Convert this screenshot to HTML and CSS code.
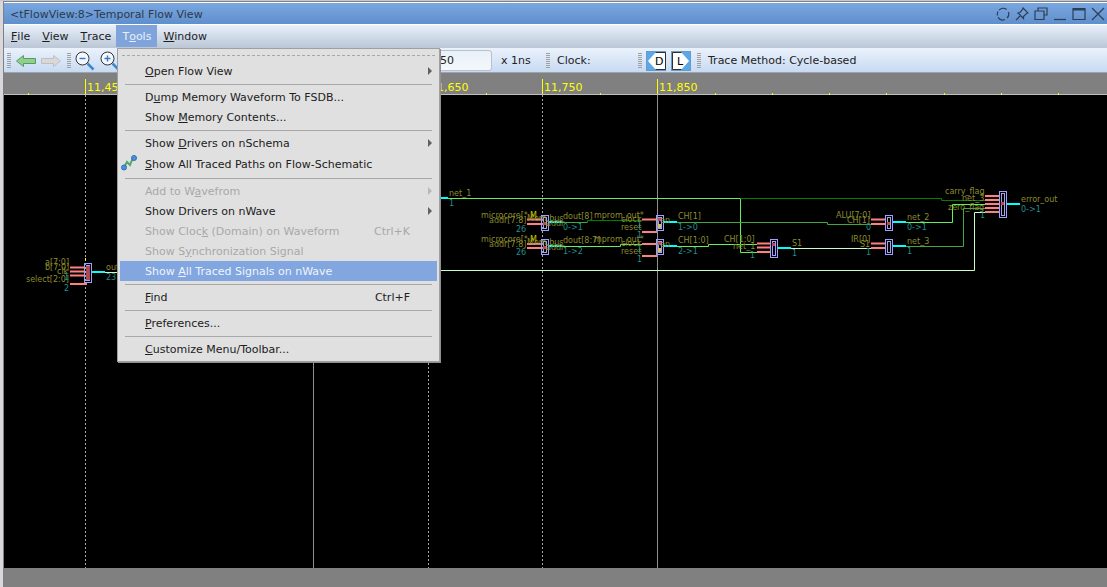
FILE: index.html
```html
<!DOCTYPE html>
<html lang="en">
<head>
<meta charset="utf-8">
<title>Temporal Flow View</title>
<link rel="stylesheet" href="styles.css">
</head>
<body>
<div class="window">
  <header class="titlebar">
    <span class="title">&lt;tFlowView:8&gt;Temporal Flow View</span>
    <div class="winbtns">
      <svg class="winbtn" viewBox="0 0 14 14"><path d="M3 3.2A5.6 5.6 0 0 1 10.6 2.4M12.4 5A5.6 5.6 0 0 1 11 11M8.8 12.5A5.6 5.6 0 0 1 2 10.4M1.5 8.5A5.6 5.6 0 0 1 2 4.5"/></svg>
      <svg class="winbtn" viewBox="0 0 14 14"><path d="M8 1L13 6L11.5 6.5L8.500 9.500L8.500 11.500L3 6L5 5.500L7.500 2.500ZM5.500 8.500L1 13"/></svg>
      <svg class="winbtn" viewBox="0 0 14 14"><path d="M4 4V1H13V8H10M1 4H10V12.500H1Z"/></svg>
      <svg class="winbtn" viewBox="0 0 14 14"><path d="M1 12.500H13"/></svg>
      <svg class="winbtn" viewBox="0 0 14 14"><path d="M1 1.500H13V12.500H1Z"/><path class="thick" d="M1 2.500H13"/></svg>
      <svg class="winbtn" viewBox="0 0 14 14"><path d="M1 1L13 13M13 1L1 13"/></svg>
    </div>
  </header>
  <nav class="menubar">
    <span class="mi"><u>F</u>ile</span>
    <span class="mi"><u>V</u>iew</span>
    <span class="mi"><u>T</u>race</span>
    <span class="mi open">T<u>o</u>ols</span>
    <span class="mi"><u>W</u>indow</span>
  </nav>
  <div class="toolbar">
    <i class="grip grip-first"></i>
    <svg class="arrow" viewBox="0 0 20 12"><path class="arrow-on" d="M0.500 6L7.500 0.500V3.500H19.500V8.500H7.500V11.500Z"/></svg>
    <svg class="arrow arrow-next" viewBox="0 0 20 12"><path class="arrow-off" d="M19.500 6L12.500 0.500V3.500H0.500V8.500H12.500V11.500Z"/></svg>
    <i class="grip grip-mid"></i>
    <svg class="zoomicon" viewBox="0 0 20 20"><circle cx="7.500" cy="7.500" r="6.500"/><path class="zsign" d="M4.500 7.500H10.500"/><path class="zhandle" d="M12.500 12.500L18.500 18.500"/></svg>
    <svg class="zoomicon zoomicon-next" viewBox="0 0 20 20"><circle cx="7.500" cy="7.500" r="6.500"/><path class="zsign" d="M4.500 7.500H10.500M7.500 4.500V10.500"/><path class="zhandle" d="M12.500 12.500L18.500 18.500"/></svg>
    <div class="field">50</div>
    <span class="unit">x 1ns</span>
    <i class="grip grip-clock"></i>
    <span class="clock">Clock:</span>
    <i class="grip grip-dl"></i>
    <svg class="dl dl-d" viewBox="0 0 20 20"><rect class="dl-bg" x="0.500" y="0.500" width="19" height="19"/><path class="dl-white" d="M9.500 1.500H19.500V18.500H9.500L2 10Z"/><path class="dl-edge" d="M9.500 1.500H19.500V18.500H9.500"/><text class="dl-t" x="9" y="14">D</text></svg>
    <svg class="dl dl-l" viewBox="0 0 20 20"><rect class="dl-bg" x="0.500" y="0.500" width="19" height="19"/><path class="dl-white" d="M10.500 1.500H1.500V18.500H10.500L18 10Z"/><path class="dl-edge" d="M10.500 1.500H1.500V18.500H10.500"/><text class="dl-t" x="6" y="14">L</text></svg>
    <i class="grip grip-trace"></i>
    <span class="method">Trace Method: Cycle-based</span>
  </div>
  <svg class="ruler" viewBox="4 73 1103 22" width="1103" height="22">
    <path class="rule-line" d="M4 94.500H1107"/>
    <path class="tick" d="M28.500 93V95M142.500 93V95M199.500 93V95M256.500 93V95M371.500 93V95M486.500 93V95M600.500 93V95M715.500 93V95M772.500 93V95M829.500 93V95M886.500 93V95M944.500 93V95M1001.500 93V95M1058.500 93V95"/>
    <path class="tick" d="M85.500 79V94M313.500 79V94M428.500 79V94M542.500 79V94M657.500 79V94"/>
    <text class="rt" x="87" y="91">11,450</text>
    <text class="rt" x="315" y="91">11,550</text>
    <text class="rt" x="430" y="91">11,650</text>
    <text class="rt" x="544" y="91">11,750</text>
    <text class="rt" x="659" y="91">11,850</text>
  </svg>
  <svg class="canvas" viewBox="4 95 1103 473" width="1103" height="473">
    <path class="vdash" d="M85.500 95V568M428.500 95V568M542.500 95V568"/>
    <path class="vsolid" d="M313.500 95V568M657.500 95V568"/>

    <path class="w-bright" d="M448 198.500H740.500V252.500H757"/>
    <path class="w-dark" d="M740.500 198.500H941.500V200.500H985"/>
    <path class="w-pale" d="M105 272.500H120V270.500H974.500V212.500H985"/>
    <path class="w-mid" d="M562 222.500H587.500"/>
    <path class="w-dark" d="M587.500 222.500V220.500H642"/>
    <path class="w-mid" d="M677 222.500H827.500V224.500H871"/>
    <path class="w-bright" d="M906 222.500H952.500V204.500H985"/>
    <path class="w-bright" d="M562 246.500H620.500V244.500H642"/>
    <path class="w-bright" d="M677 246.500H708.500V244.500H757"/>
    <path class="w-pale" d="M791 248.500H871"/>
    <path class="w-mid" d="M906 246.500H963.500V208.500H985"/>

    <path class="pin" d="M70 267.500H84M70 271.500H84M70 275.500H84M70 284H87"/>
    <path class="pin" d="M527 219.500H541M527 224H541M527 244H541M527 248H541"/>
    <path class="pin" d="M642 219.500H656M642 232H657M642 244H656M642 256H657"/>
    <path class="pin" d="M757 243.500H770M757 247.500H770M757 252H770"/>
    <path class="pin" d="M871 219.500H885M871 224H885M871 243.500H885M871 248H885"/>
    <path class="pin" d="M985 196H999M985 200H999M985 204H999M985 208H999M985 212H999"/>

    <path class="out" d="M92 272H105M430 198H448M548 222H562M548 246H562M663 222H677M663 246H677M778 248H791M893 222H906M893 246H906M1007 204H1020"/>

    <g class="block"><rect x="84.500" y="263.500" width="7" height="19"/><rect x="86.500" y="265.500" width="3" height="15"/></g>
    <rect class="core" x="86" y="266" width="4" height="14"/>
    <g class="block"><rect x="541.500" y="215.500" width="7" height="15"/><rect x="543.500" y="217.500" width="3" height="11"/></g>
    <g class="block"><rect x="541.500" y="239.500" width="7" height="15"/><rect x="543.500" y="241.500" width="3" height="11"/></g>
    <g class="block"><rect x="656.500" y="215.500" width="7" height="15"/><rect x="658.500" y="217.500" width="3" height="11"/></g>
    <g class="block"><rect x="656.500" y="239.500" width="7" height="15"/><rect x="658.500" y="241.500" width="3" height="11"/></g>
    <g class="block"><rect x="770.500" y="239.500" width="7" height="18"/><rect x="772.500" y="241.500" width="3" height="14"/></g>
    <g class="block"><rect x="885.500" y="215.500" width="7" height="15"/><rect x="887.500" y="217.500" width="3" height="11"/></g>
    <g class="block"><rect x="885.500" y="239.500" width="7" height="15"/><rect x="887.500" y="241.500" width="3" height="11"/></g>
    <g class="block"><rect x="999.500" y="191.500" width="7" height="26"/><rect x="1001.500" y="193.500" width="3" height="22"/></g>
    <path class="dot" d="M543 222H546V225H543ZM543 246H546V249H543ZM658 218H661V221H658ZM658 242H661V245H658ZM772 243H775V246H772ZM887 222H890V225H887ZM1001 202H1004V205H1001Z"/>
    <path class="dot2" d="M658 224H661V228H658ZM658 248H661V252H658Z"/>

    <g class="lbl">
      <text x="449" y="196">net_1</text>
      <text x="481" y="218">microcore[*</text><text x="489" y="223">addr[7:8]</text>
      <text x="481" y="242">microcore[*</text><text x="489" y="247">addr[7:8]</text>
      <text x="527" y="221">Mem.bus</text><text x="546" y="226">addr</text>
      <text x="527" y="245">Mem.bus</text><text x="546" y="250">addr</text>
      <text x="563" y="219">dout[8]</text><text x="563" y="243">dout[8:7]</text>
      <text x="594" y="218">mprom_out*</text><text x="594" y="242">mprom_out*</text>
      <text x="621" y="222">clock</text><text x="621" y="230">reset</text>
      <text x="621" y="246">clock</text><text x="621" y="254">reset</text>
      <text x="660" y="223">en</text><text x="660" y="247">en</text>
      <text x="678" y="219">CH[1]</text><text x="678" y="243">CH[1:0]</text>
      <text x="724" y="242">CH[1:0]</text><text x="733" y="249">net_1</text>
      <text x="792" y="246">S1</text>
      <text x="836" y="218">ALU[7:0]</text><text x="847" y="223">CH[1]</text>
      <text x="851" y="242">IR[0]</text><text x="860" y="247">S1</text>
      <text x="907" y="220">net_2</text><text x="907" y="244">net_3</text>
      <text x="945" y="194">carry_flag</text><text x="962" y="201">net_3</text><text x="948" y="210">zero_flag</text>
      <text x="1021" y="202">error_out</text>
      <text x="45" y="265">a[7:0]</text><text x="45" y="270">b[7:0]</text><text x="57" y="274">clk</text>
      <text x="26" y="282">select[2:0]</text><text x="106" y="270">out</text>
    </g>
    <g class="val">
      <text x="449" y="206">1</text>
      <text x="516" y="232">26</text><text x="516" y="255">26</text>
      <text x="563" y="230">0-&gt;1</text><text x="563" y="254">1-&gt;2</text>
      <text x="637" y="228">1</text><text x="637" y="238">1</text>
      <text x="637" y="252">1</text><text x="637" y="262">1</text>
      <text x="678" y="230">1-&gt;0</text><text x="678" y="254">2-&gt;1</text>
      <text x="750" y="258">1</text><text x="792" y="256">1</text>
      <text x="866" y="230">0</text><text x="866" y="255">1</text>
      <text x="907" y="230">0-&gt;1</text><text x="907" y="254">1</text>
      <text x="980" y="218">1</text><text x="1021" y="212">0-&gt;1</text>
      <text x="64" y="280">1</text><text x="64" y="291">2</text><text x="106" y="280">23</text>
    </g>
    <g class="hilite"><text x="530" y="218">M</text><text x="530" y="242">M</text></g>
    <path class="mark" d="M85 258H86V261H85Z"/>
  </svg>
  <div class="footer"></div>

  <div class="menu">
    <div class="tearoff"></div>
    <div class="item arrowed"><span><u>O</u>pen Flow View</span></div>
    <hr class="sep">
    <div class="item"><span>D<u>u</u>mp Memory Waveform To FSDB...</span></div>
    <div class="item"><span>Show <u>M</u>emory Contents...</span></div>
    <hr class="sep">
    <div class="item arrowed"><span>Show <u>D</u>rivers on nSchema</span></div>
    <div class="item item-icon">
      <svg class="pathicon" viewBox="0 0 17 17"><path class="pi-line" d="M3 12.500L6 7L9 10L11 5L13 3"/><circle class="pi-dot" cx="3" cy="12.500" r="2.500"/><circle class="pi-dot" cx="13" cy="3" r="2.500"/></svg>
      <span><u>S</u>how All Traced Paths on Flow-Schematic</span>
    </div>
    <hr class="sep">
    <div class="item off arrowed"><span>Add to W<u>a</u>vefrom</span></div>
    <div class="item arrowed"><span>Show Drivers on nWave</span></div>
    <div class="item off"><span>Show Cloc<u>k</u> (Domain) on Waveform</span><kbd>Ctrl+K</kbd></div>
    <div class="item off"><span>Show S<u>y</u>nchronization Signal</span></div>
    <div class="item hot"><span>Show <u>A</u>ll Traced Signals on nWave</span></div>
    <hr class="sep">
    <div class="item"><span><u>F</u>ind</span><kbd>Ctrl+F</kbd></div>
    <hr class="sep">
    <div class="item"><span><u>P</u>references...</span></div>
    <hr class="sep">
    <div class="item"><span><u>C</u>ustomize Menu/Toolbar...</span></div>
  </div>
</div>
</body>
</html>
```
FILE: styles.css
```css
* { box-sizing: border-box; }
html, body { margin: 0; padding: 0; height: 100%; overflow: hidden; }
body { background: #808080; font: 11px "DejaVu Sans", sans-serif; color: #222; }
svg { display: block; }

.window {
  position: relative;
  width: 1107px;
  height: 587px;
  padding-left: 4px;
  background: linear-gradient(#d8d8dc, #d8d8dc) no-repeat 0 0 / 3px 100%, linear-gradient(#808080, #808080) no-repeat 3px 0 / 1px 100%;
  border-top: 1px solid #c4c8d0;
  overflow: hidden;
}

.titlebar {
  height: 22px;
  margin-top: 1px;
  border-top: 1px solid #fff;
  padding: 1px 0 0 6px;
  display: flex;
  align-items: center;
  justify-content: space-between;
  background: linear-gradient(#7aa7e0, #5f8fcc);
  color: #2c3a4c;
}
.title { font-size: 11px; }
.winbtns { display: flex; gap: 5px; padding-right: 2px; }
.winbtn { width: 14px; height: 14px; fill: none; stroke: #2d3e55; stroke-width: 1.2; }
.winbtn .thick { stroke-width: 2; }

.menubar {
  height: 24px;
  display: flex;
  align-items: stretch;
  border-top: 1px solid #fff;
  border-bottom: 1px solid #c0c8d6;
  background: linear-gradient(#e8f0fa, #bcc8d8);
  padding-left: 1px;
}
.mi { padding: 1px 6px 0; display: flex; align-items: center; color: #1c1c1c; }
.mi.open { background: #7fa4dc; color: #e8eef8; margin-left: -1px; }

.toolbar {
  height: 25px;
  display: flex;
  align-items: center;
  background: linear-gradient(#eaf2fc, #c8daf2);
  border-bottom: 1px solid #9aa4b0;
  padding-top: 1px;
}
.grip {
  width: 4px;
  height: 16px;
  flex: none;
  background: repeating-linear-gradient(#a0a0a0 0 1px, transparent 1px 2px);
}
.grip-first { margin-left: 3px; }
.arrow { width: 20px; height: 12px; margin-left: 5px; flex: none; }
.arrow-next { margin-left: 5px; }
.arrow-on { fill: #8fd08f; stroke: #5a9a5a; }
.arrow-off { fill: #d8d8d8; stroke: #c0c0c0; }
.grip-mid { margin-left: 6px; }
.zoomicon { width: 20px; height: 20px; margin-left: 4px; flex: none; fill: #f4f8fc; stroke: #333; }
.zoomicon-next { margin-left: 5px; }
.zsign { stroke: #3a78c0; stroke-width: 1.4; fill: none; }
.zhandle { stroke: #3a88d0; stroke-width: 2.5; fill: none; }
.field {
  width: 60px;
  height: 21px;
  margin-left: 312px;
  padding-left: 7px;
  line-height: 19px;
  border: 1px solid #b8c0cc;
  border-radius: 3px;
  background: linear-gradient(#e8f0f8, #f4f8fc);
  flex: none;
}
.unit { margin-left: 9px; width: 45px; flex: none; }
.clock { margin-left: 7px; width: 81px; flex: none; }
.dl { width: 20px; height: 20px; flex: none; }
.dl-d { margin-left: 4px; }
.dl-l { margin-left: 5px; }
.dl-bg { fill: #5aa8e8; stroke: #6a9ac8; }
.dl-white { fill: #fff; }
.dl-edge { fill: none; stroke: #303030; }
.dl-t { fill: #000; font-size: 11px; }
.grip-trace { margin-left: 6px; }
.method { margin-left: 7px; white-space: nowrap; }

.ruler { background: #808080; }
.rule-line { stroke: #c0c0c0; fill: none; }
.tick { stroke: #ffff00; fill: none; }
.rt { fill: #ffff00; font-size: 11px; }

.canvas { background: #000; font-size: 8px; }
.vdash { stroke: #a8a8a8; stroke-dasharray: 2 2; fill: none; }
.vsolid { stroke: #909090; fill: none; }
.w-bright { stroke: #60f060; fill: none; }
.w-dark { stroke: #008000; fill: none; }
.w-mid { stroke: #40a840; fill: none; }
.w-pale { stroke: #c8ffc8; fill: none; }
.pin { stroke: #ff8080; stroke-width: 2; fill: none; }
.out { stroke: #00ffff; stroke-width: 2; fill: none; }
.block rect { fill: none; stroke: #a0a0ff; }
.core { fill: #b04850; }
.dot { fill: #c04848; }
.dot2 { fill: #d8c060; }
.lbl text { fill: #8c8c2c; }
.val text { fill: #209090; }
.hilite text { fill: #c8c800; }
.mark { fill: #ffff00; }

.footer { height: 19px; background: #808080; }

.menu {
  position: absolute;
  left: 117px;
  top: 47px;
  width: 323px;
  height: 314px;
  padding: 3px 2px 0;
  background: #e0e0e0;
  border: 1px solid #a0a0a0;
  box-shadow: 1px 1px 0 #909090;
}
.tearoff {
  height: 6px;
  margin: 3px 2px 0;
  border-top: 1px dashed #a8a8a8;
}
.item {
  height: 20px;
  display: flex;
  align-items: center;
  justify-content: space-between;
  padding: 0 27px 0 25px;
  position: relative;
  color: #202020;
}
.item-icon { height: 21px; margin-top: 1px; padding-bottom: 1px; }
.item.off { color: #a8a8a8; }
.item.hot { background: #82a6e0; color: #f0f4fa; }
kbd { font: inherit; }
.arrowed::after {
  content: "";
  position: absolute;
  right: 5px;
  top: 6px;
  border-left: 4px solid #606060;
  border-top: 4px solid transparent;
  border-bottom: 4px solid transparent;
}
.off.arrowed::after { border-left-color: #b8b8b8; }
.sep { height: 1px; margin: 3px 5px 2px 5px; border: 0; background: #a8a8a8; }
.pathicon { position: absolute; left: 1px; top: 1px; width: 17px; height: 17px; }
.pi-line { fill: none; stroke: #50a868; stroke-width: 2; }
.pi-dot { fill: #4a90e0; stroke: #3070b0; }
```
